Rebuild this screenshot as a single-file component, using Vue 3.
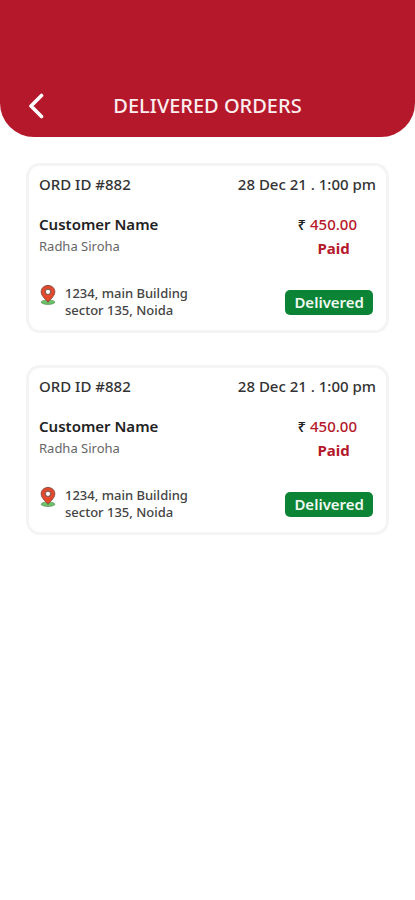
<template>
  <div class="page">
    <header class="top-bar">
      <button class="back-btn" type="button" aria-label="Back">
        <svg viewBox="0 0 16 26" width="16" height="26">
          <path d="M13.5 2.5 L3 13 L13.5 23.5" />
        </svg>
      </button>
      <h1 class="page-title">DELIVERED ORDERS</h1>
    </header>

    <main class="orders">
      <article v-for="(order, index) in orders" :key="index" class="order-card">
        <div class="row order-head">
          <span>ORD ID #{{ order.id }}</span>
          <time class="order-date">{{ order.date }}</time>
        </div>

        <div class="row order-body">
          <div>
            <h2 class="customer-label">Customer Name</h2>
            <p class="customer-name">{{ order.customer }}</p>
          </div>
          <div class="payment">
            <p class="amount"><span class="rupee">₹</span> {{ order.amount }}</p>
            <p class="pay-status">{{ order.payment }}</p>
          </div>
        </div>

        <div class="row order-foot">
          <div class="address">
            <!-- Location pin -->
            <svg class="pin" viewBox="0 0 16 20" width="16" height="20">
              <ellipse cx="8" cy="17.2" rx="6.8" ry="2.2" fill="#6cc36a" stroke="#4a8a4c" stroke-width="0.7" />
              <path
                d="M8 17.4 C6.8 15 1.2 11.6 1.2 6.8 C1.2 3.1 4.1 0.5 8 0.5 C11.9 0.5 14.8 3.1 14.8 6.8 C14.8 11.6 9.2 15 8 17.4 Z"
                fill="#e4492c"
                stroke="#7a4035"
                stroke-width="0.9"
              />
              <circle cx="8" cy="6.8" r="2.7" fill="#ffffff" stroke="#8a5a58" stroke-width="1.2" />
            </svg>
            <p class="address-text">
              {{ order.street }}<br />{{ order.area }}
            </p>
          </div>
          <span class="badge">{{ order.status }}</span>
        </div>
      </article>
    </main>
  </div>
</template>

<script setup>
import { ref } from "vue";

const order = {
  id: 882,
  date: "28 Dec 21 . 1:00 pm",
  customer: "Radha Siroha",
  amount: "450.00",
  payment: "Paid",
  street: "1234, main Building",
  area: "sector 135, Noida",
  status: "Delivered",
};

const orders = ref([{ ...order }, { ...order }]);
</script>

<style>
html,
body {
  margin: 0;
  padding: 0;
  background: #ffffff;
}
</style>

<style scoped>
.page {
  min-height: 100vh;
  background: #ffffff;
  color: #222222;
  font-family: "Noto Sans", "Open Sans", sans-serif;
}

h1,
h2,
p {
  margin: 0;
}

/* Header */
.top-bar {
  display: grid;
  grid-template-columns: 48px 1fr 48px;
  align-items: center;
  padding: 88px 12px 13px;
  background: #b5182b;
  border-radius: 0 0 34px 34px;
}

.back-btn {
  display: flex;
  align-items: center;
  justify-content: center;
  height: 36px;
  padding: 0;
  border: none;
  background: none;
  cursor: pointer;
}

.back-btn path {
  fill: none;
  stroke: #ffffff;
  stroke-width: 3.6;
  stroke-linecap: round;
  stroke-linejoin: round;
}

.page-title {
  color: #fdeef0;
  font-size: 20px;
  font-weight: 500;
  line-height: 26px;
  text-align: center;
}

/* Orders */
.orders {
  display: flex;
  flex-direction: column;
  gap: 32px;
  padding: 26px 26px;
}

.order-card {
  padding: 8px 10px 11px;
  border: 3px solid #f4f4f4;
  border-radius: 14px;
  background: #ffffff;
}

.row {
  display: flex;
  justify-content: space-between;
}

.order-head {
  font-size: 15px;
  font-weight: 500;
  line-height: 20px;
  color: #333333;
}

.order-body {
  margin-top: 20px;
}

.customer-label {
  font-size: 15px;
  font-weight: 600;
  line-height: 20px;
}

.customer-name {
  margin-top: 2px;
  color: #666666;
  font-size: 13px;
  line-height: 20px;
}

.payment {
  padding-right: 19px;
  color: #b5182b;
  font-size: 15px;
  line-height: 20px;
}

.amount {
  font-weight: 500;
}

.rupee {
  color: #222222;
}

.pay-status {
  margin-top: 4px;
  padding-left: 20px;
  font-weight: 700;
}

.order-foot {
  align-items: center;
  margin-top: 27px;
}

.address {
  display: flex;
  gap: 9px;
  padding-left: 1px;
}

.address-text {
  color: #444444;
  font-size: 13px;
  font-weight: 500;
  line-height: 17px;
}

.badge {
  margin-right: 3px;
  padding: 2px 9px;
  border-radius: 5px;
  background: #0b8435;
  color: #f1fbf3;
  font-size: 15px;
  font-weight: 600;
  line-height: 21px;
}
</style>
